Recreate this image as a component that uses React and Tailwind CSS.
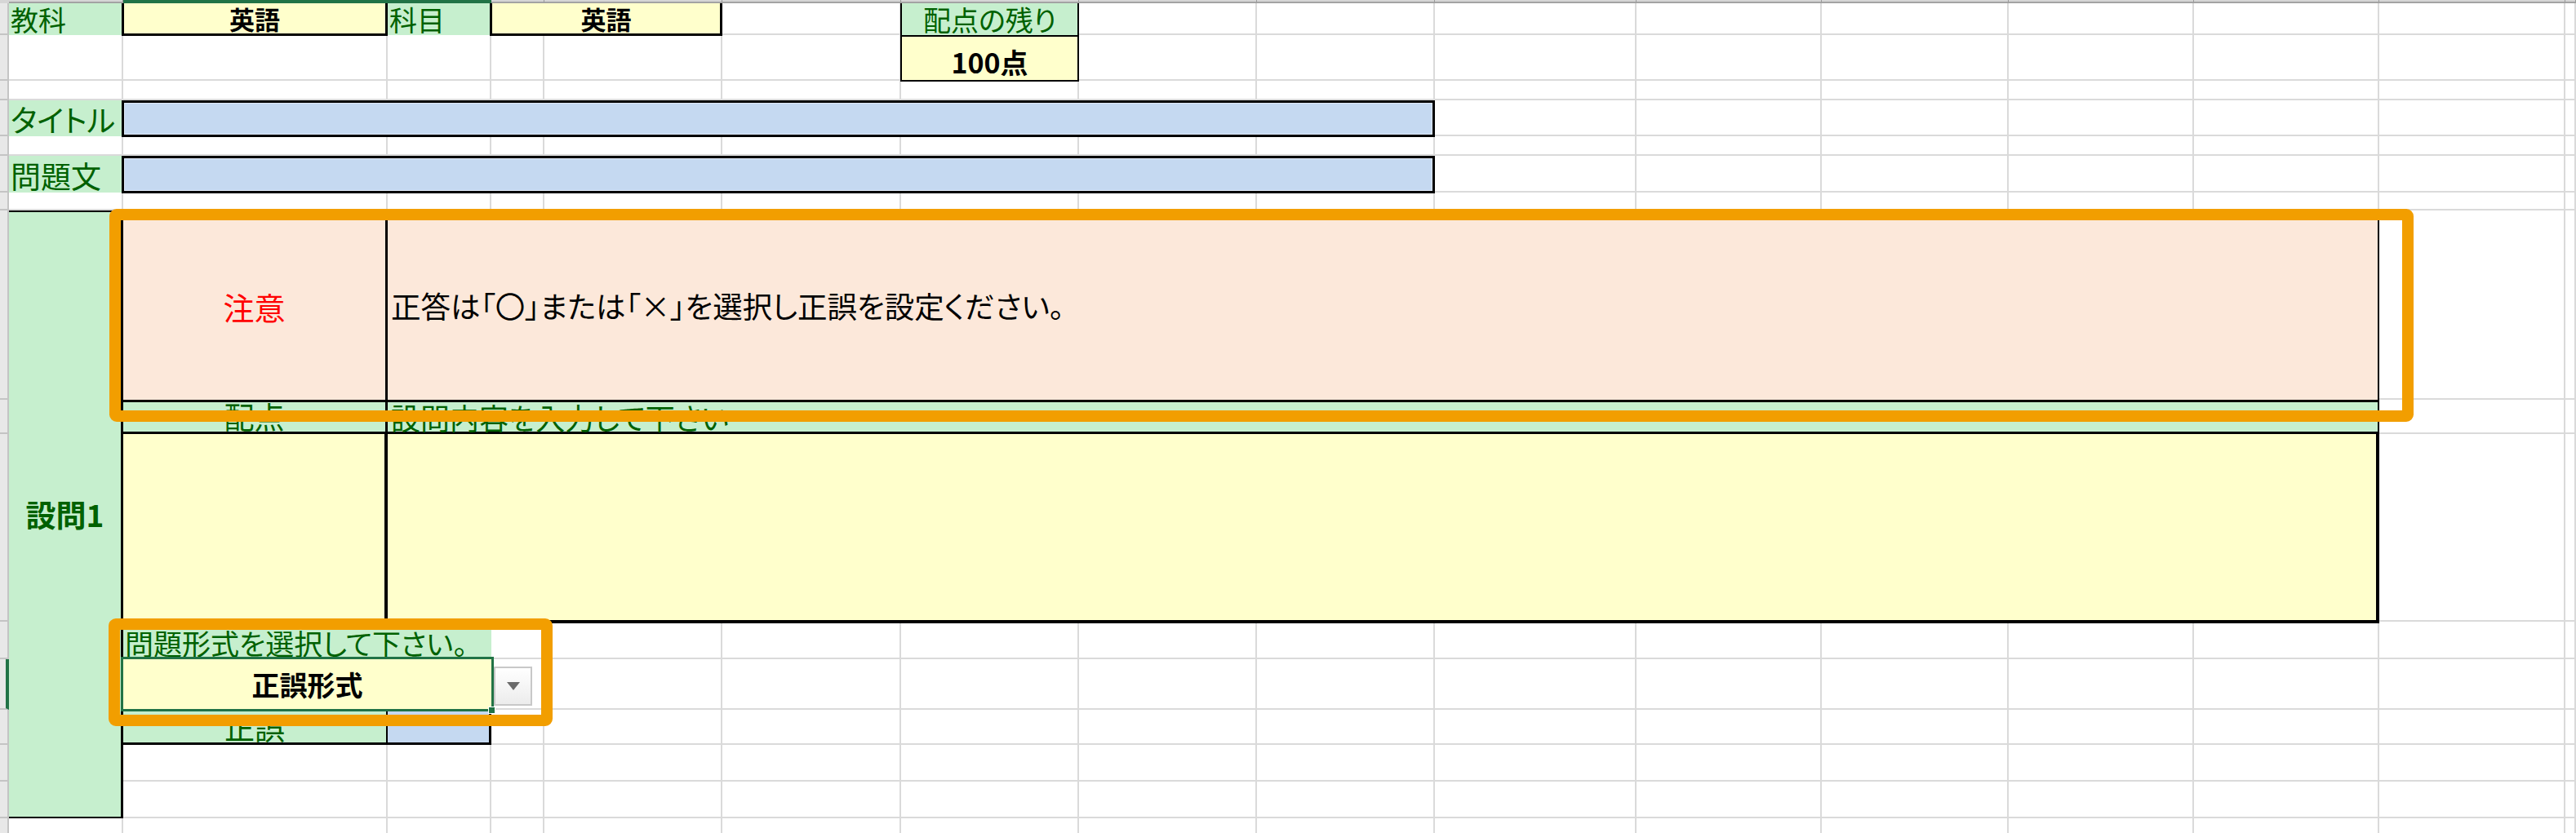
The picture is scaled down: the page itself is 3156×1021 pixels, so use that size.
import React from 'react';

// Excel sheet: column track widths (row header, A..O, rest) and row heights (col header, rows 1..16)
const COLS = 17;
const ROWS = 17;

const bgClass = (r, c) => {
  if (r === 0) {
    if (c === 0) return 'bg-[#d6d6d6]';
    if (c === 2 || c === 3) return 'bg-[#217346]';
    return 'bg-[#d6d6d6] border-b-2 border-r border-b-[#a3a3a3] border-r-[#9a9a9a]';
  }
  if (c === 0) {
    return r === 12
      ? 'bg-[#e8e8e8] border-r-4 border-r-[#217346] border-b-2 border-b-[#c4c4c4]'
      : 'bg-[#e8e8e8] border-r-2 border-r-[#c4c4c4] border-b-2 border-b-[#c4c4c4]';
  }
  return 'border-r-2 border-b-2 border-[#dadada]';
};

const green = 'bg-[#C6EFCE] text-[#006100]';

export default function App() {
  return (
    <div className="relative grid h-[1021px] w-[3156px] overflow-hidden bg-white font-['Noto_Sans_CJK_JP',sans-serif] text-[37px] leading-none [font-feature-settings:'palt'] grid-cols-[11px_140px_324px_127px_65px_218px_219px_218px_218px_218px_247px_227px_229px_227px_227px_228px_1fr] grid-rows-[4px_39px_56px_24px_44px_24px_45px_22px_232px_42px_230px_46px_62px_43px_45px_45px_45px]">
      {/* gridlines */}
      <div className="col-span-full row-span-full grid grid-cols-subgrid grid-rows-subgrid">
        {Array.from({ length: ROWS * COLS }, (_, i) => (
          <div key={i} className={bgClass(Math.floor(i / COLS), i % COLS)} />
        ))}
      </div>

      {/* row 1 */}
      <div className={`col-[2/span_1] row-[2/span_1] pl-[2px] pt-[1px] text-[34px] leading-[38px] ${green}`}>教科</div>
      <div className="col-[3/span_1] row-[2/span_1] -ml-[2px] -mb-[1px] flex items-center justify-center border-[3px] border-t-0 border-black bg-[#FFFFCC] text-[31px] font-bold text-black">英語</div>
      <div className={`col-[4/span_1] row-[2/span_1] pl-[2px] pt-[1px] text-[34px] leading-[38px] ${green}`}>科目</div>
      <div className="col-[5/span_2] row-[2/span_1] -ml-[2px] -mb-[1px] flex items-center justify-center border-[3px] border-t-0 border-black bg-[#FFFFCC] text-[31px] font-bold text-black">英語</div>
      <div className={`col-[8/span_1] row-[2/span_1] -ml-[1px] border-x-2 border-black pt-[1px] text-center text-[34px] leading-[38px] ${green}`}>配点の残り</div>
      <div className="col-[8/span_1] row-[3/span_1] -ml-[1px] -mb-[1px] flex items-center justify-center border-2 border-black bg-[#FFFFCC] pt-[8px] text-[34px] font-bold text-black">100点</div>

      {/* title / question text */}
      <div className={`col-[2/span_1] row-[5/span_1] flex items-end pb-[2px] pl-[2px] ${green}`}>タイトル</div>
      <div className="col-[3/span_8] row-[5/span_1] -ml-[2px] -mb-[1px] border-[3px] border-black bg-[#C5D9F1] shadow-[inset_0_0_0_1px_#dfe9f7]" />
      <div className={`col-[2/span_1] row-[7/span_1] flex items-end pb-[2px] pl-[2px] ${green}`}>問題文</div>
      <div className="col-[3/span_8] row-[7/span_1] -ml-[2px] -mb-[1px] border-[3px] border-black bg-[#C5D9F1] shadow-[inset_0_0_0_1px_#dfe9f7]" />

      {/* question block */}
      <div className={`col-[2/span_1] row-[9/span_8] flex items-center justify-center border-y-2 border-r-[3px] border-black font-bold ${green}`}>設問1</div>

      <div className="col-[3/span_1] row-[9/span_1] flex items-center justify-center border-t-[3px] border-r-[3px] border-black bg-[#FCE8DA] text-[38px] text-[#FF0000]">注意</div>
      <div className="col-[4/span_12] row-[9/span_1] flex items-center whitespace-nowrap border-t-[3px] border-r-2 border-black bg-[#FCE8DA] pl-[4px] text-[36.5px] text-black">正答は「〇」または「×」を選択し正誤を設定ください。</div>

      <div className={`col-[3/span_1] row-[10/span_1] flex items-end justify-center border-y-[3px] border-r-[3px] border-black ${green}`}>配点</div>
      <div className={`col-[4/span_12] row-[10/span_1] flex items-end whitespace-nowrap border-y-[3px] border-r-2 border-black pl-[4px] text-[36px] ${green}`}>設問内容を入力して下さい</div>

      <div className="col-[3/span_1] row-[11/span_1] -mb-[2px] border-r-[4px] border-b-[4px] border-black bg-[#FFFFCC]" />
      <div className="col-[4/span_12] row-[11/span_1] -mb-[2px] border-r-[4px] border-b-[4px] border-black bg-[#FFFFCC]" />

      <div className={`col-[3/span_2] row-[12/span_1] flex items-end whitespace-nowrap pb-[3px] pl-[2px] text-[35px] ${green}`}>問題形式を選択して下さい。</div>

      <div className="relative col-[3/span_2] row-[13/span_1] -mx-[3px] -mt-[3px] -mb-[2px] flex items-center justify-center border-[3px] border-[#217346] bg-[#FFFFCC] text-[34px] font-bold text-black">
        正誤形式
        <span className="absolute -bottom-[6px] -right-[5px] h-[9px] w-[9px] border border-white bg-[#217346]" />
        <div className="absolute left-full top-[9px] ml-[3px] flex h-[48px] w-[47px] items-center justify-center border-2 border-[#c8c8c8] bg-linear-to-b from-white to-[#ececec]">
          <svg width="16" height="10" viewBox="0 0 16 10">
            <path d="M0 0h16L8 10z" fill="#6b6b6b" />
          </svg>
        </div>
      </div>

      <div className={`col-[3/span_1] row-[14/span_1] flex items-end justify-center border-r-2 border-b-[3px] border-black ${green}`}>正誤</div>
      <div className="col-[4/span_1] row-[14/span_1] border-r-[3px] border-b-[3px] border-black bg-[#C5D9F1]" />

      {/* annotation frames */}
      <div className="pointer-events-none absolute left-[134px] top-[256px] h-[261px] w-[2823px] rounded-[9px] border-[14px] border-[#F29E00]" />
      <div className="pointer-events-none absolute left-[133px] top-[758px] h-[132px] w-[544px] rounded-[9px] border-[14px] border-[#F29E00]" />
    </div>
  );
}
